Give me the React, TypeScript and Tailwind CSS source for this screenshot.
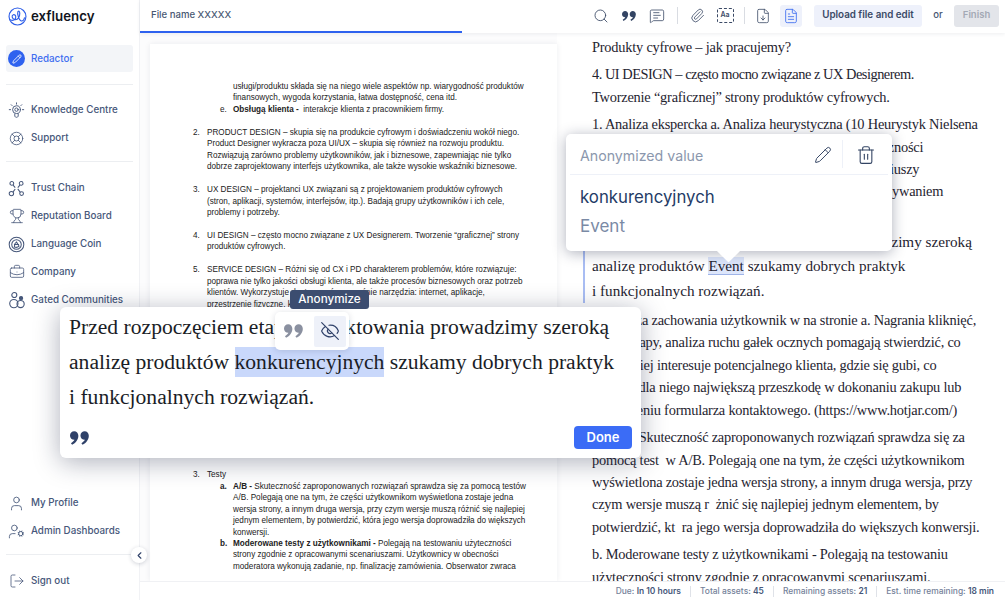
import {
  BriefcaseBusiness,
  ChevronLeft,
  EyeOff,
  FileDown,
  FileText,
  LifeBuoy,
  LogOut,
  MessageSquareText,
  Paperclip,
  Pencil,
  Search,
  Trash2,
  Trophy,
  User,
  UserCog,
} from "lucide-react";

function QuoteMark({ className }: { className: string }) {
  return (
    <svg viewBox="0 0 20 14" className={className} fill="currentColor">
      <path d="M4.4 0C6.9 0 8.8 2 8.8 4.6 8.8 8.6 6 12.4 2.2 14L1 12.4C3 11.2 4.3 9.7 4.7 8.8 2.1 8.9 0 7 0 4.5 0 2 2 0 4.4 0Z" />
      <path d="M15.4 0C17.9 0 19.8 2 19.8 4.6 19.8 8.6 17 12.4 13.2 14L12 12.4C14 11.2 15.3 9.7 15.7 8.8 13.1 8.9 11 7 11 4.5 11 2 13 0 15.4 0Z" />
    </svg>
  );
}

function Logo() {
  return (
    <svg viewBox="0 0 20 20" className="h-[19px] w-[19px] text-[#2f5fe8]" fill="none" stroke="currentColor" strokeWidth="1.2">
      <circle cx="10" cy="10" r="8.9" />
      <path d="M2.5 13.5C5 15 8.2 13.6 8.2 10.6 8.2 8.6 6.8 7.6 5.5 8.2 3.6 9 4 12.5 7 13.2 10.5 14 12.5 10 12.4 6.5 12.3 4.4 11 3.8 10.4 5 9.6 7 11.4 13.5 13.5 14.5 15.5 15.4 17 13.5 17.3 11.5" strokeLinecap="round" />
    </svg>
  );
}

function BulbIcon() {
  return (
    <svg viewBox="0 0 20 20" className="h-[17px] w-[17px]" fill="none" stroke="currentColor" strokeWidth="1.1" strokeLinecap="round">
      <circle cx="10" cy="9" r="4.6" />
      <circle cx="10" cy="9" r="2" />
      <path d="M8 14v2.5c0 .8 1 1.5 2 1.5s2-.7 2-1.5V14M10 1v1.5M3.8 3.2l1 1M16.2 3.2l-1 1M1.5 9H3M17 9h1.5" />
    </svg>
  );
}

function ChainIcon() {
  return (
    <svg viewBox="0 0 20 20" className="h-[17px] w-[17px]" fill="none" stroke="currentColor" strokeWidth="1.2">
      <circle cx="4.5" cy="4" r="2.2" />
      <circle cx="15.5" cy="4" r="2.2" />
      <circle cx="4" cy="16" r="2.6" />
      <circle cx="16" cy="16" r="2.2" />
      <path d="M6 6l2.5 3M14 6l-2.5 3M8.5 10.5L6 14M11.5 10.5l3 4" />
    </svg>
  );
}

function CoinIcon() {
  return (
    <svg viewBox="0 0 20 20" className="h-[17px] w-[17px]" fill="none" stroke="currentColor" strokeWidth="1.2">
      <circle cx="10" cy="10" r="8.6" />
      <circle cx="10" cy="10" r="5.6" />
      <path d="M7.5 13c0-3 1-5 2.5-6 1 2 2.6 3.500 3 5-1.500 1.500-4 1.500-5.500 1ZM7 10h6" />
    </svg>
  );
}

function CommunityIcon() {
  return (
    <svg viewBox="0 0 20 20" className="h-[18px] w-[18px]" fill="none" stroke="currentColor" strokeWidth="1.2">
      <circle cx="7" cy="4.500" r="2.800" />
      <circle cx="14.500" cy="8" r="1.800" fill="currentColor" />
      <circle cx="6.500" cy="14" r="4.600" />
      <circle cx="14" cy="14.500" r="4" />
    </svg>
  );
}

function TextBoxIcon() {
  return (
    <div className="flex h-[15px] w-[17px] items-center justify-center rounded-[2px] border border-dashed border-[#3b4a66] text-[7px] font-semibold text-[#3b4a66]">
      Aa
    </div>
  );
}

function NavItem({ icon, label }: { icon: React.ReactNode; label: string }) {
  return (
    <div className="flex h-[28px] items-center">
      <div className="flex w-[25px] justify-center pr-[4px] text-[#46577a]">{icon}</div>
      <span className="whitespace-nowrap text-[9.8px] font-medium text-[#46577a]">{label}</span>
    </div>
  );
}

function Sidebar() {
  return (
    <aside className="relative z-0 flex h-full w-[140px] shrink-0 flex-col border-r border-[#f1f2f5] bg-white px-[6px]">
      <div className="flex h-[45px] items-start gap-[4px] pl-[2px] pt-[7px]">
        <Logo />
        <span className="text-[13.3px] font-semibold leading-[19px] text-[#12151c]">exfluency</span>
      </div>
      <div className="flex h-[27px] items-center gap-[6px] rounded-[3px] bg-[#f3f5f8] pl-[2px]">
        <div className="flex h-[17px] w-[17px] items-center justify-center rounded-full bg-[#2f62ef]">
          <Pencil className="h-[10px] w-[10px] text-white" strokeWidth={2} />
        </div>
        <span className="pt-px text-[9.8px] font-medium text-[#3f6ef0]">Redactor</span>
      </div>
      <div className="mb-[11px] mt-[12px] h-px bg-[#eceef1]" />
      <NavItem icon={<BulbIcon />} label="Knowledge Centre" />
      <NavItem icon={<LifeBuoy className="h-[15px] w-[15px]" strokeWidth={1.3} />} label="Support" />
      <div className="mb-[12px] mt-[9px] h-px bg-[#eceef1]" />
      <NavItem icon={<ChainIcon />} label="Trust Chain" />
      <NavItem icon={<Trophy className="h-[16px] w-[16px]" strokeWidth={1.2} />} label="Reputation Board" />
      <NavItem icon={<CoinIcon />} label="Language Coin" />
      <NavItem icon={<BriefcaseBusiness className="h-[16px] w-[16px]" strokeWidth={1.2} />} label="Company" />
      <NavItem icon={<CommunityIcon />} label="Gated Communities" />
      <div className="flex-1" />
      <NavItem icon={<User className="h-[17px] w-[17px]" strokeWidth={1.2} />} label="My Profile" />
      <NavItem icon={<UserCog className="h-[17px] w-[17px]" strokeWidth={1.2} />} label="Admin Dashboards" />
      <div className="mb-[12px] mt-[9px] h-px bg-[#eceef1]" />
      <NavItem icon={<LogOut className="h-[16px] w-[16px]" strokeWidth={1.2} />} label="Sign out" />
      <div className="h-[5px]" />
    </aside>
  );
}

function Header() {
  return (
    <header className="relative z-0 h-[33px] shrink-0 bg-white shadow-[0_1px_4px_rgba(30,40,70,0.08)]">
      <div className="flex h-[31px] items-center pl-[11px] pr-[6px]">
        <span className="text-[9.6px] font-medium text-[#475772]">File name XXXXX</span>
        <div className="ml-auto flex items-center text-[#3b4a66]">
          <div className="flex w-[28px] justify-center">
            <Search className="h-[16px] w-[16px]" strokeWidth={1.3} />
          </div>
          <div className="flex w-[28px] justify-center">
            <QuoteMark className="h-[10px] w-[14px] text-[#334463]" />
          </div>
          <div className="flex w-[28px] justify-center">
            <MessageSquareText className="h-[16px] w-[16px]" strokeWidth={1.2} />
          </div>
          <div className="ml-[6px] mr-[5px] h-[17px] w-px bg-[#d9dce2]" />
          <div className="flex w-[28px] justify-center">
            <Paperclip className="h-[15px] w-[15px]" strokeWidth={1.3} />
          </div>
          <div className="flex w-[28px] justify-center">
            <TextBoxIcon />
          </div>
          <div className="ml-[5px] mr-[4px] h-[17px] w-px bg-[#d9dce2]" />
          <div className="flex w-[28px] justify-center">
            <FileDown className="h-[16px] w-[16px]" strokeWidth={1.2} />
          </div>
          <div className="ml-[3px] flex h-[22px] w-[22px] items-center justify-center rounded-[3px] bg-[#eef1fb]">
            <FileText className="h-[16px] w-[16px] text-[#3f6ef0]" strokeWidth={1.3} />
          </div>
          <div className="ml-[12px] flex h-[22px] w-[108px] items-center justify-center rounded-[3px] bg-[#eef1fb] text-[9.8px] font-semibold text-[#3b4a66]">
            Upload file and edit
          </div>
          <span className="w-[32px] text-center text-[9.5px] font-medium text-[#475772]">or</span>
          <div className="flex h-[22px] w-[45px] items-center justify-center rounded-[3px] bg-[#e3e5ea] text-[9.5px] font-semibold text-[#a3a9b5]">
            Finish
          </div>
        </div>
      </div>
      <div className="h-[2px] w-[322px] bg-[#2f62ef]" />
    </header>
  );
}

function Lines({ items }: { items: React.ReactNode[] }) {
  return (
    <>
      {items.map((l, i) => (
        <div key={i} className="whitespace-nowrap">
          {l}
        </div>
      ))}
    </>
  );
}

function DocItem({ n, bold, children, sub }: { n: string; bold?: boolean; children: React.ReactNode; sub?: boolean }) {
  return (
    <div className={sub ? "flex pl-[27px]" : "flex"}>
      <span className={bold ? "w-[13px] shrink-0 font-bold" : sub ? "w-[13px] shrink-0" : "w-[14px] shrink-0"}>{n}</span>
      <div>{children}</div>
    </div>
  );
}

function DocPage() {
  return (
    <div className="h-full w-[407px] overflow-hidden bg-white pl-[43px] pt-[37px] font-['Liberation_Sans',Arial,sans-serif] text-[8.17px] leading-[11.45px] text-[#222] shadow-[0_0_6px_rgba(30,40,70,0.08)]">
      <div className="pl-[40px]">
        <Lines
          items={[
            "usługi/produktu składa się na niego wiele aspektów np. wiarygodność produktów",
            "finansowych, wygoda korzystania, łatwa dostępność, cena itd.",
          ]}
        />
      </div>
      <DocItem n="e." sub>
        <b>Obsługą klienta -</b>&nbsp; interakcje klienta z pracownikiem firmy.
      </DocItem>
      <div className="mt-[11.5px]">
        <DocItem n="2.">
          <Lines
            items={[
              "PRODUCT DESIGN – skupia się na produkcie cyfrowym i doświadczeniu wokół niego.",
              "Product Designer wykracza poza UI/UX – skupia się również na rozwoju produktu.",
              "Rozwiązują zarówno problemy użytkowników, jak i biznesowe, zapewniając nie tylko",
              "dobrze zaprojektowany interfejs użytkownika, ale także wysokie wskaźniki biznesowe.",
            ]}
          />
        </DocItem>
      </div>
      <div className="mt-[11.5px]">
        <DocItem n="3.">
          <Lines
            items={[
              "UX DESIGN – projektanci UX związani są z projektowaniem produktów cyfrowych",
              "(stron, aplikacji, systemów, interfejsów, itp.). Badają grupy użytkowników i ich cele,",
              "problemy i potrzeby.",
            ]}
          />
        </DocItem>
      </div>
      <div className="mt-[11.5px]">
        <DocItem n="4.">
          <Lines
            items={[
              "UI DESIGN – często mocno związane z UX Designerem. Tworzenie “graficznej” strony",
              "produktów cyfrowych.",
            ]}
          />
        </DocItem>
      </div>
      <div className="mt-[11.5px]">
        <DocItem n="5.">
          <Lines
            items={[
              "SERVICE DESIGN – Różni się od CX i PD charakterem problemów, które rozwiązuje:",
              "poprawa nie tylko jakości obsługi klienta, ale także procesów biznesowych oraz potrzeb",
              "klientów. Wykorzystuje dostępne równocześnie narzędzia: internet, aplikacje,",
              "przestrzenie fizyczne, kontakt z personelem.",
            ]}
          />
        </DocItem>
      </div>
      <div className="mt-[159px]">
        <DocItem n="3.">Testy</DocItem>
      </div>
      <DocItem n="a." bold sub>
        <Lines
          items={[
            <>
              <b>A/B -</b> Skuteczność zaproponowanych rozwiązań sprawdza się za pomocą testów
            </>,
            "A/B. Polegają one na tym, że części użytkownikom wyświetlona zostaje jedna",
            "wersja strony, a innym druga wersja, przy czym wersje muszą różnić się najlepiej",
            "jednym elementem, by potwierdzić, która jego wersja doprowadziła do większych",
            "konwersji.",
          ]}
        />
      </DocItem>
      <DocItem n="b." bold sub>
        <Lines
          items={[
            <>
              <b>Moderowane testy z użytkownikami -</b> Polegają na testowaniu użyteczności
            </>,
            "strony zgodnie z opracowanymi scenariuszami. Użytkownicy w obecności",
            "moderatora wykonują zadanie, np. finalizację zamówienia. Obserwator zwraca",
          ]}
        />
      </DocItem>
    </div>
  );
}

function Para({ lines }: { lines: React.ReactNode[] }) {
  return (
    <div className="mb-[5px]">
      {lines.map((l, i) => (
        <div key={i} className="whitespace-pre">
          {l}
        </div>
      ))}
    </div>
  );
}

function TextPane() {
  return (
    <div className="h-full min-w-0 flex-1 overflow-hidden pl-[35px] pt-[3px] font-['Liberation_Serif','Times_New_Roman',serif] text-[14.4px] leading-[22.4px] tracking-[-0.22px] text-[#1f2430]">
      <Para lines={["Produkty cyfrowe – jak pracujemy?"]} />
      <Para
        lines={[
          <span className="tracking-[-0.48px]">4. UI DESIGN – często mocno związane z UX Designerem.</span>,
          "Tworzenie “graficznej” strony produktów cyfrowych.",
        ]}
      />
      <Para
        lines={[
          "1. Analiza ekspercka a. Analiza heurystyczna (10 Heurystyk Nielsena",
          "dotyczących projektowania interakcji) - ocena użyteczności",
          "interfejsu przez ekspertów produktu b. Analiza scenariuszy",
          "użytkownika i ścieżek klienta w serwisie oraz z zakupywaniem",
        ]}
      />
      <div className="relative mb-[5px] mt-[27px] text-[15.2px] leading-[24.4px] tracking-normal">
        <div className="absolute -left-[9px] bottom-0 top-[-6px] w-[2px] bg-[#a9bdf3]" />
        <div className="whitespace-pre">Przed rozpoczęciem etapu projektowania prowadzimy szeroką</div>
        <div className="whitespace-pre">
          analizę produktów <span className="border-b border-[#9fb4e8] bg-[#dde6fb]">Event</span> szukamy dobrych praktyk
        </div>
        <div className="whitespace-pre">i funkcjonalnych rozwiązań.</div>
      </div>
      <div className="h-px" />
      <Para
        lines={[
          "1. Analiza zachowania użytkownik w na stronie a. Nagrania kliknięć,",
          "Scroll mapy, analiza ruchu gałek ocznych pomagają stwierdzić, co",
          "najbardziej interesuje potencjalnego klienta, gdzie się gubi, co",
          "stanowi dla niego największą przeszkodę w dokonaniu zakupu lub",
          "wypełnieniu formularza kontaktowego. (https://www.hotjar.com/)",
        ]}
      />
      <Para
        lines={[
          "a. A/B - Skuteczność zaproponowanych rozwiązań sprawdza się za",
          "pomocą test  w A/B. Polegają one na tym, że części użytkownikom",
          "wyświetlona zostaje jedna wersja strony, a innym druga wersja, przy",
          "czym wersje muszą r  żnić się najlepiej jednym elementem, by",
          "potwierdzić, kt  ra jego wersja doprowadziła do większych konwersji.",
        ]}
      />
      <Para
        lines={[
          "b. Moderowane testy z użytkownikami - Polegają na testowaniu",
          "użyteczności strony zgodnie z opracowanymi scenariuszami.",
        ]}
      />
    </div>
  );
}

function Stat({ label, value, last }: { label: string; value: string; last?: boolean }) {
  return (
    <>
      <span className="text-[#75829a]">
        {label} <span className="font-semibold text-[#46577a]">{value}</span>
      </span>
      {!last && <span className="mx-[9px] h-[11px] w-px bg-[#dfe2e8]" />}
    </>
  );
}

function Footer() {
  return (
    <footer className="flex h-[19px] shrink-0 items-center justify-end border-t border-[#f0f1f4] bg-white pr-[11px] text-[8.45px] font-medium">
      <Stat label="Due:" value="In 10 hours" />
      <Stat label="Total assets:" value="45" />
      <Stat label="Remaining assets:" value="21" />
      <Stat label="Est. time remaining:" value="18 min" last />
    </footer>
  );
}

function PopoverCard() {
  return (
    <div className="absolute left-[566px] top-[134px] z-10 h-[117px] w-[326px] rounded-[5px] bg-white px-[4px] shadow-[0_2px_14px_rgba(20,30,60,0.35)]">
      <div className="flex h-[41px] items-center border-b border-[#eef1f8] pl-[10px] pr-[12px]">
        <span className="pt-[4px] text-[14.2px] text-[#8b97ad]">Anonymized value</span>
        <Pencil className="ml-auto mt-[2px] h-[18px] w-[18px] text-[#334463]" strokeWidth={1.3} />
        <div className="ml-[10px] mr-[13px] h-[28px] w-px bg-[#eef1f8]" />
        <Trash2 className="mt-[2px] h-[20px] w-[20px] text-[#334463]" strokeWidth={1.3} />
      </div>
      <div className="pl-[10px] pt-[11px] text-[16.8px] leading-[22px] text-[#243b66]">konkurencyjnych</div>
      <div className="pl-[10px] pt-[7px] text-[17px] leading-[22px] text-[#7a8aa5]">Event</div>
      <div className="absolute left-[154px] top-[108px] h-[17px] w-[17px] rotate-45 rounded-[1px] bg-white" />
    </div>
  );
}

function EditCard() {
  return (
    <div className="absolute left-[60px] top-[307px] z-10 flex h-[151px] w-[581px] flex-col rounded-[6px] bg-white pl-[9px] pr-[9px] pt-[3px] font-['Liberation_Serif','Times_New_Roman',serif] text-[21.6px] leading-[35px] text-[#1a1d26] shadow-[0_4px_26px_rgba(20,30,60,0.35)]">
      <div className="whitespace-nowrap">Przed rozpoczęciem etapu projektowania prowadzimy szeroką</div>
      <div className="whitespace-nowrap">
        analizę produktów <span className="bg-[#c9d8fb] py-[3px]">konkurencyjnych</span> szukamy dobrych praktyk
      </div>
      <div className="whitespace-nowrap">i funkcjonalnych rozwiązań.</div>
      <div className="mt-auto flex items-center justify-between pb-[9px]">
        <QuoteMark className="ml-[1px] h-[14px] w-[19px] text-[#2f4169]" />
        <div className="flex h-[23px] w-[58px] items-center justify-center rounded-[4px] bg-[#3b6cf6] font-['Inter',sans-serif] text-[13px] font-semibold text-white">
          Done
        </div>
      </div>
    </div>
  );
}

function SelectionBar() {
  return (
    <>
      <div className="absolute left-[290px] top-[290px] z-30 flex h-[19px] w-[79px] items-center justify-center rounded-[3px] bg-[#3c4d70] text-[11.7px] font-medium text-white">
        Anonymize
      </div>
      <div className="absolute left-[275px] top-[312px] z-20 flex h-[38px] w-[74px] items-center rounded-[5px] bg-white pl-[9px] shadow-[0_1px_6px_rgba(20,30,60,0.15)]">
        <QuoteMark className="h-[14px] w-[19px] text-[#8a90a0]" />
        <div className="ml-[11px] flex h-[31px] w-[32px] items-center justify-center rounded-[2px] bg-[#eef1f9]">
          <EyeOff className="h-[20px] w-[20px] text-[#2f4169]" strokeWidth={1.4} />
        </div>
      </div>
    </>
  );
}

export default function App() {
  return (
    <div className="relative flex h-[600px] w-[1005px] overflow-hidden bg-white font-['Inter',sans-serif]">
      <Sidebar />
      <div className="flex min-w-0 flex-1 flex-col">
        <Header />
        <main className="flex min-h-0 flex-1 bg-white">
          <div className="h-full w-[417px] shrink-0 bg-[#fcfcfd] pl-[10px] pt-[11px]">
            <DocPage />
          </div>
          <TextPane />
        </main>
        <Footer />
      </div>
      <div className="absolute left-[131px] top-[547px] z-10 flex h-[16px] w-[16px] items-center justify-center rounded-full bg-white shadow-[0_1px_4px_rgba(20,30,60,0.2)]">
        <ChevronLeft className="h-[11px] w-[11px] text-[#2f4169]" strokeWidth={2.5} />
      </div>
      <PopoverCard />
      <EditCard />
      <SelectionBar />
    </div>
  );
}
